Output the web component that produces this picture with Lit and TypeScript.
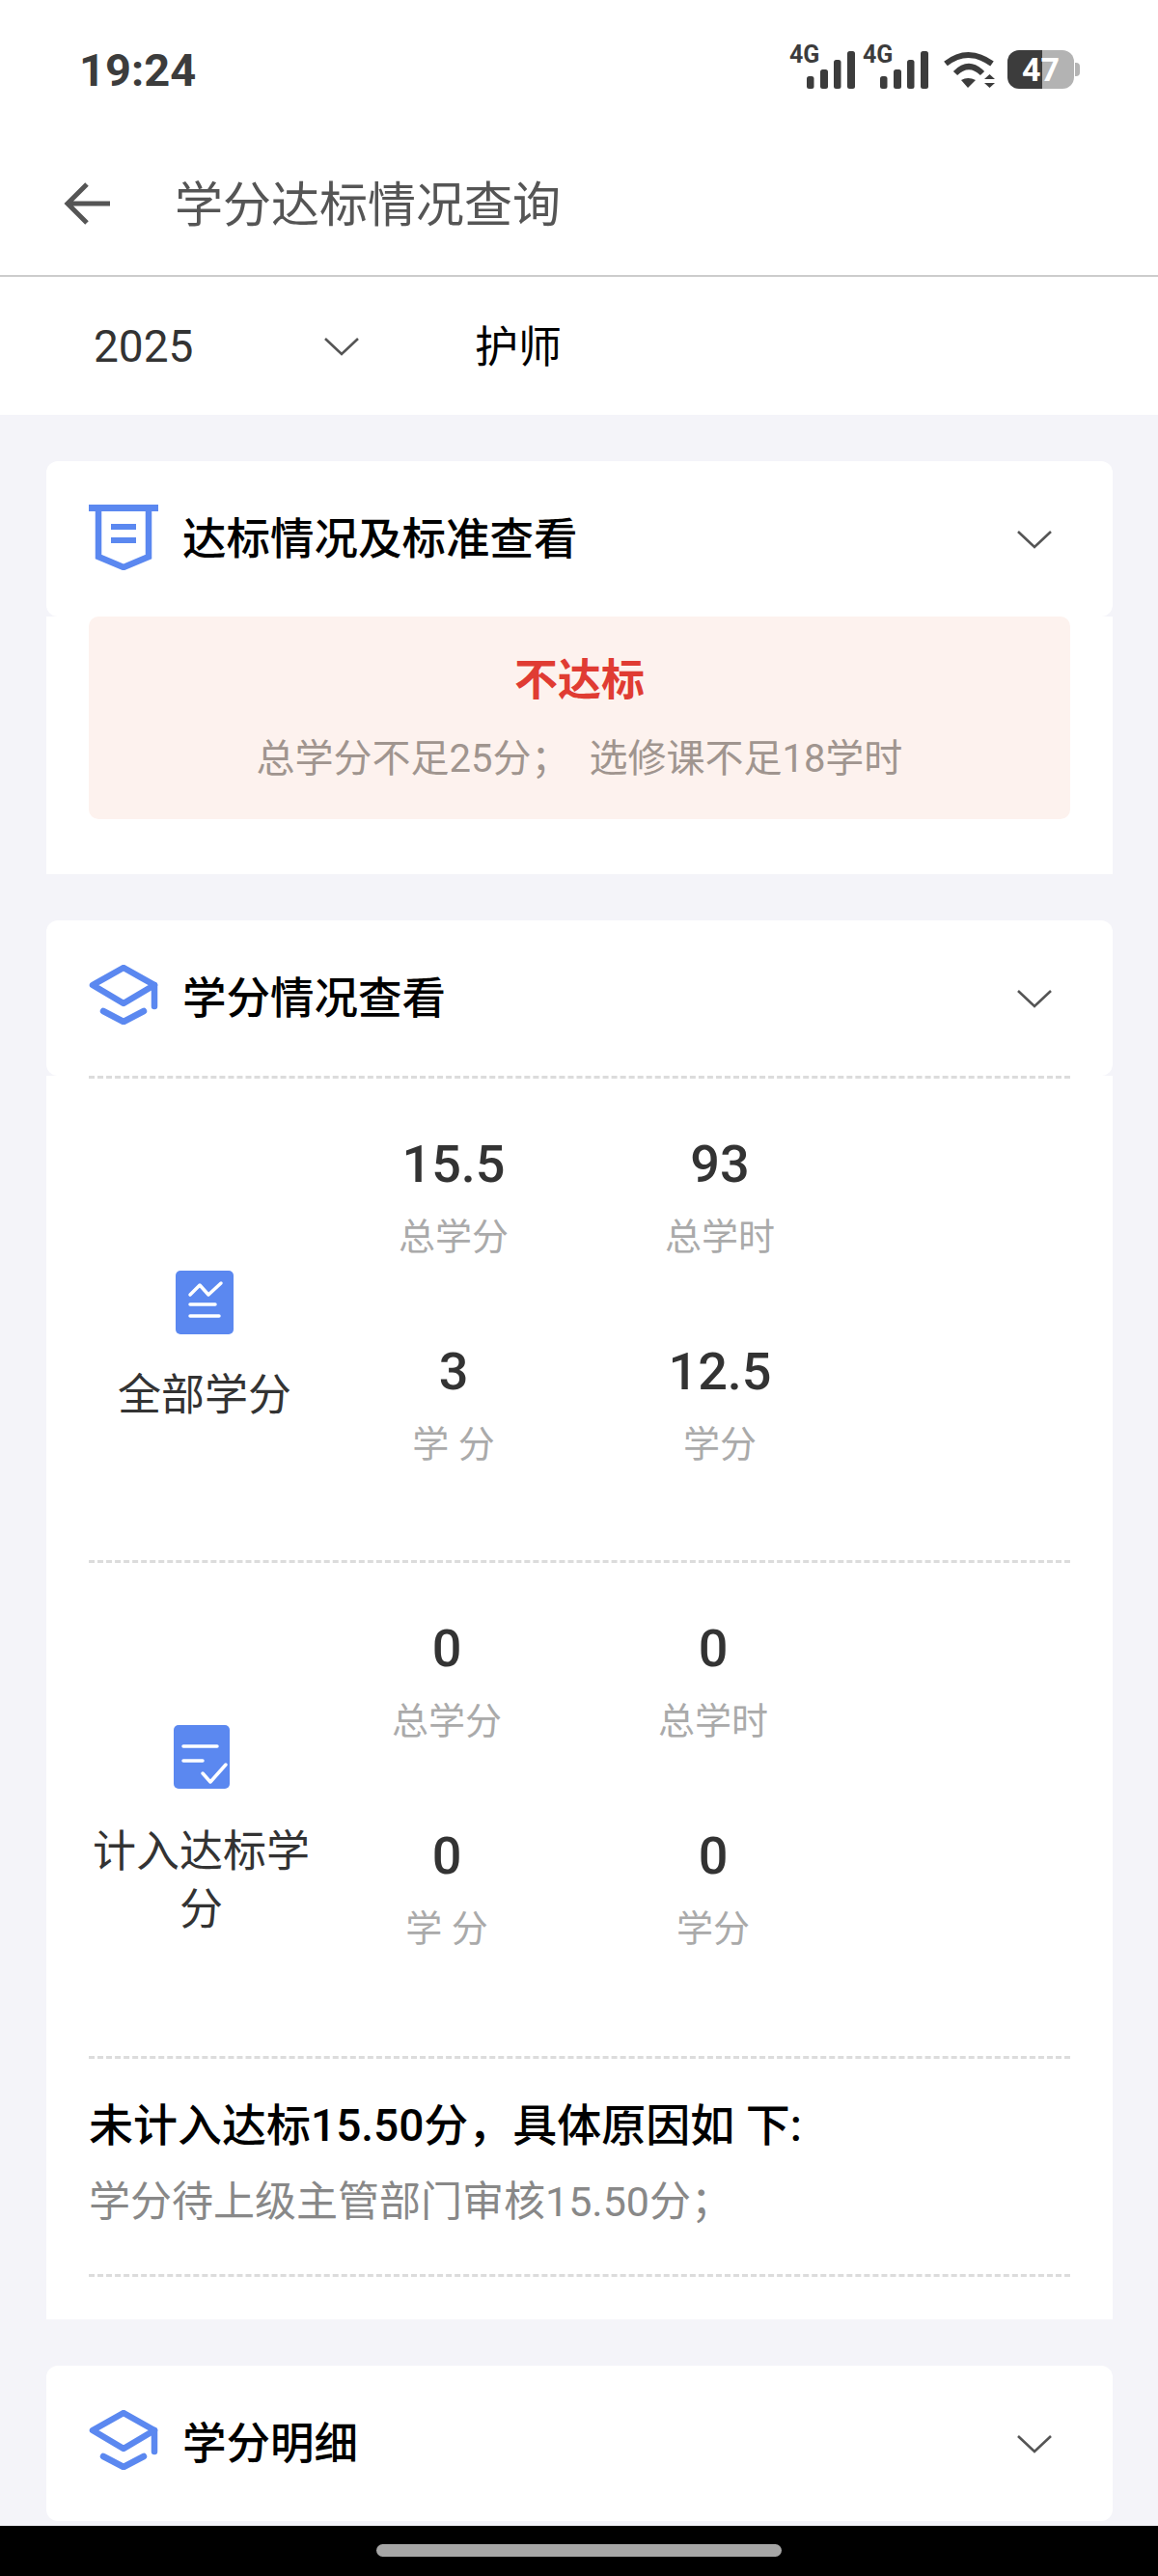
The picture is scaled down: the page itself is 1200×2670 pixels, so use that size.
import { LitElement, html, css, svg } from 'lit';
import { customElement } from 'lit/decorators.js';

const chevron = svg`<path d="M2 2 L19 18 L36 2" fill="none" stroke="#555" stroke-width="2.6"/>`;

const signal = html`<div class="signal">
  <span class="net">4G</span>
  <svg viewBox="0 0 68 44" width="68" height="44">
    <rect x="18" y="31" width="7.5" height="13" rx="2.5" fill="#3c3c3c"/>
    <rect x="32" y="24" width="8" height="20" rx="2.5" fill="#3c3c3c"/>
    <rect x="46" y="14" width="7.5" height="30" rx="2.5" fill="#3c3c3c"/>
    <rect x="60" y="5" width="8" height="39" rx="2.5" fill="#3c3c3c"/>
  </svg>
</div>`;

const shieldIcon = html`<svg class="head-icon shield" viewBox="0 0 72 68" width="72" height="68">
  <rect x="0" y="0" width="72" height="7" fill="#5b88f0"/>
  <path d="M10 5 V54 L36 65 L62 54 V5" fill="none" stroke="#5b88f0" stroke-width="6.5"/>
  <rect x="23" y="20" width="26" height="6" fill="#5b88f0"/>
  <rect x="23" y="34" width="26" height="6" fill="#5b88f0"/>
</svg>`;

const capIcon = html`<svg class="head-icon" viewBox="0 0 72 62" width="72" height="62">
  <g fill="none" stroke="#5b88f0" stroke-width="6.5" stroke-linecap="round" stroke-linejoin="round">
    <path d="M4 21 L36 3 L68 21 L36 40 Z"/>
    <path d="M68 21 V43"/>
    <path d="M15 48 L36 59 L57 48"/>
  </g>
</svg>`;

const chartIcon = html`<svg class="stat-icon" viewBox="0 0 60 66" width="60" height="66">
  <rect width="60" height="66" rx="5" fill="#5b88f0"/>
  <g fill="none" stroke="#fff" stroke-width="3.5" stroke-linecap="round" stroke-linejoin="round">
    <path d="M15 25 L25 15 L34 25 L47 13"/>
    <path d="M15 35 H41"/>
    <path d="M15 47 H45"/>
  </g>
</svg>`;

const checkIcon = html`<svg class="stat-icon" viewBox="0 0 58 66" width="58" height="66">
  <rect width="58" height="66" rx="5" fill="#5b88f0"/>
  <g fill="none" stroke="#fff" stroke-width="3.5" stroke-linecap="round" stroke-linejoin="round">
    <path d="M10 22 H45"/>
    <path d="M10 37 H30"/>
    <path d="M30 50 L38 59 L54 41"/>
  </g>
</svg>`;

@customElement('app-root')
export class AppRoot extends LitElement {
  static styles = css`
    :host {
      display: flex;
      flex-direction: column;
      width: 1200px;
      height: 2670px;
      overflow: hidden;
      background: #f4f4f9;
      font-family: Roboto, 'Noto Sans CJK SC', sans-serif;
      color: #333;
    }

    .top {
      background: #fff;
    }

    .status {
      display: flex;
      justify-content: space-between;
      height: 136px;
      box-sizing: border-box;
      padding: 48px 81px 0 82px;
    }

    .time {
      font-size: 47px;
      line-height: 50px;
      font-weight: 700;
      color: #3c3c3c;
    }

    .status-icons {
      display: flex;
      align-items: flex-start;
    }

    .signal {
      position: relative;
      width: 68px;
      height: 44px;
    }

    .signal + .signal {
      margin-left: 8px;
    }

    .net {
      position: absolute;
      left: 0;
      top: -4px;
      font-size: 25px;
      line-height: 26px;
      font-weight: 700;
      color: #3c3c3c;
    }

    .wifi {
      margin: 5px 0 0 15px;
    }

    .battery {
      position: relative;
      width: 69px;
      height: 40px;
      margin: 4px 6px 0 12px;
      border-radius: 12px;
      background: linear-gradient(90deg, #3c3c3c 52%, #b3b3b3 52%);
      color: #fff;
      font-size: 34px;
      line-height: 40px;
      font-weight: 700;
      text-align: center;
    }

    .battery::after {
      content: '';
      position: absolute;
      left: 70px;
      top: 13px;
      width: 5px;
      height: 14px;
      border-radius: 0 4px 4px 0;
      background: #b3b3b3;
    }

    .nav {
      display: flex;
      align-items: center;
      height: 149px;
      padding-left: 66px;
      border-bottom: 2px solid #ccc;
    }

    .nav-title {
      margin: 0 0 6px 67px;
      font-size: 50px;
      color: #555;
    }

    .filter {
      display: flex;
      align-items: center;
      height: 143px;
      padding-left: 97px;
    }

    .year {
      width: 238px;
      font-size: 46px;
      color: #333;
    }

    .filter-chevron {
      margin-right: 119px;
    }

    .job {
      margin-bottom: 5px;
      font-size: 45px;
      color: #000;
    }

    main {
      flex: 1;
      display: flex;
      flex-direction: column;
      gap: 48px;
      padding: 48px 47px 0 48px;
    }

    .head {
      display: flex;
      align-items: center;
      height: 161px;
      box-sizing: border-box;
      padding: 0 62px 0 44px;
      border-radius: 12px;
      background: #fff;
    }

    .head-icon {
      margin-bottom: 8px;
    }

    .head-icon.shield {
      margin-bottom: 4px;
    }

    .head-title {
      flex: 1;
      margin: 0 0 7px 25px;
      font-size: 45.5px;
      font-weight: 500;
      color: #000;
    }

    .body {
      background: #fff;
      padding: 0 44px;
    }

    .result {
      padding-bottom: 57px;
    }

    .alert {
      height: 210px;
      box-sizing: border-box;
      padding-top: 37px;
      border-radius: 10px;
      background: #fdf2ee;
      text-align: center;
    }

    .alert-title {
      font-size: 45px;
      line-height: 60px;
      font-weight: 700;
      color: #e03c33;
    }

    .alert-text {
      margin-top: 21px;
      font-size: 40px;
      line-height: 60px;
      color: #a0958f;
      white-space: pre;
    }

    .section {
      display: flex;
      align-items: flex-start;
      padding-top: 57px;
      border-top: 3px dashed #dcdcdc;
    }

    .all {
      height: 442px;
    }

    .counted {
      height: 454px;
    }

    .side {
      display: flex;
      flex-direction: column;
      align-items: center;
      font-size: 45px;
      line-height: 60px;
      text-align: center;
      color: #333;
    }

    .all .side {
      width: 240px;
      gap: 34px;
      margin-top: 142px;
    }

    .counted .side {
      width: 233px;
      gap: 36px;
      margin-top: 111px;
    }

    .stats {
      display: grid;
      grid-template-columns: repeat(2, 276px);
      row-gap: 83px;
      text-align: center;
    }

    .num {
      font-size: 54px;
      line-height: 64px;
      font-weight: 500;
      color: #333;
    }

    .label {
      margin-top: 18px;
      font-size: 38px;
      line-height: 50px;
      color: #aaa;
    }

    .reason {
      height: 229px;
      box-sizing: border-box;
      padding-top: 39px;
      border-top: 3px dashed #dcdcdc;
      border-bottom: 3px dashed #dcdcdc;
    }

    .reason-title {
      font-size: 46px;
      line-height: 60px;
      font-weight: 500;
      color: #000;
    }

    .reason-text {
      margin-top: 19px;
      font-size: 43px;
      line-height: 60px;
      color: #888;
    }

    .credits {
      padding-bottom: 44px;
    }

    .home {
      display: flex;
      justify-content: center;
      height: 52px;
      padding-top: 19px;
      box-sizing: border-box;
      background: #000;
    }

    .pill {
      width: 420px;
      height: 13px;
      border-radius: 7px;
      background: #a6a6a6;
    }
  `;

  renderHead(icon: unknown, title: string) {
    return html`
      <div class="head">
        ${icon}
        <div class="head-title">${title}</div>
        <svg viewBox="0 0 38 20" width="38" height="20">${chevron}</svg>
      </div>
    `;
  }

  renderStat(num: string, label: string) {
    return html`<div><div class="num">${num}</div><div class="label">${label}</div></div>`;
  }

  render() {
    return html`
      <div class="top">
        <div class="status">
          <div class="time">19:24</div>
          <div class="status-icons">
            ${signal}${signal}
            <svg class="wifi" viewBox="0 0 55 39" width="55" height="39">
              <path d="M3 13 Q26 -5 51 13" fill="none" stroke="#3c3c3c" stroke-width="6"/>
              <path d="M13 23 Q27 9 41 23" fill="none" stroke="#3c3c3c" stroke-width="6"/>
              <path d="M19 30 Q26 26 34 30 L26 38 Z" fill="#3c3c3c"/>
              <path d="M43 29 L48.5 24 L54 29 Z M43 33 L54 33 L48.5 38 Z" fill="#3c3c3c"/>
            </svg>
            <div class="battery">47</div>
          </div>
        </div>
        <div class="nav">
          <svg viewBox="0 0 48 44" width="48" height="44">
            <path d="M48 22 H4 M24 2 L4 22 L24 42" fill="none" stroke="#555" stroke-width="5"/>
          </svg>
          <div class="nav-title">学分达标情况查询</div>
        </div>
        <div class="filter">
          <div class="year">2025</div>
          <svg class="filter-chevron" viewBox="0 0 38 20" width="38" height="20">${chevron}</svg>
          <div class="job">护师</div>
        </div>
      </div>

      <main>
        <div>
          ${this.renderHead(shieldIcon, '达标情况及标准查看')}
          <div class="body result">
            <div class="alert">
              <div class="alert-title">不达标</div>
              <div class="alert-text">总学分不足25分；  选修课不足18学时</div>
            </div>
          </div>
        </div>

        <div>
          ${this.renderHead(capIcon, '学分情况查看')}
          <div class="body credits">
            <div class="section all">
              <div class="side">${chartIcon}<div>全部学分</div></div>
              <div class="stats">
                ${this.renderStat('15.5', '总学分')}
                ${this.renderStat('93', '总学时')}
                ${this.renderStat('3', '学 分')}
                ${this.renderStat('12.5', '学分')}
              </div>
            </div>
            <div class="section counted">
              <div class="side">${checkIcon}<div>计入达标学分</div></div>
              <div class="stats">
                ${this.renderStat('0', '总学分')}
                ${this.renderStat('0', '总学时')}
                ${this.renderStat('0', '学 分')}
                ${this.renderStat('0', '学分')}
              </div>
            </div>
            <div class="reason">
              <div class="reason-title">未计入达标15.50分，具体原因如 下:</div>
              <div class="reason-text">学分待上级主管部门审核15.50分；</div>
            </div>
          </div>
        </div>

        ${this.renderHead(capIcon, '学分明细')}
      </main>

      <div class="home"><div class="pill"></div></div>
    `;
  }
}
